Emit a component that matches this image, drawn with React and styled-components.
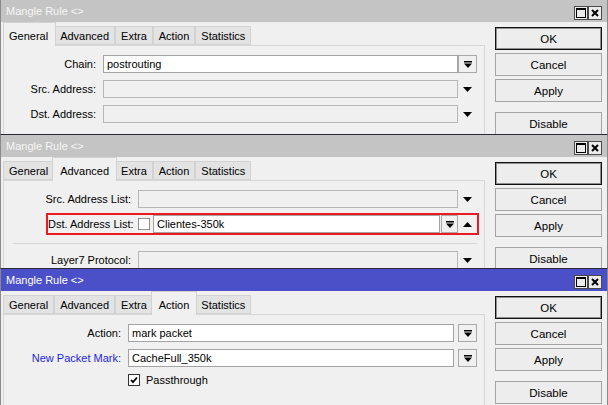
import React from 'react';
import styled, { createGlobalStyle } from 'styled-components';

const GlobalStyle = createGlobalStyle`
  html, body {
    margin: 0;
    padding: 0;
    background: #f0f0f0;
  }
  body {
    font-family: "Liberation Sans", Arial, sans-serif;
    font-size: 11px;
    color: #000;
  }
`;

const TABS = ['General', 'Advanced', 'Extra', 'Action', 'Statistics'];

const Screen = styled.div`
  width: 608px;
  height: 405px;
  overflow: hidden;
  display: flex;
  flex-direction: column;
`;

const Window = styled.div`
  flex: none;
  box-sizing: border-box;
  height: ${p => p.$h}px;
  overflow: hidden;
  display: flex;
  flex-direction: column;
  background: #f0f0f0;
  border-left: 1px solid #8a8a8a;
  border-right: 1px solid #8a8a8a;
  border-bottom: ${p => (p.$last ? 'none' : '1px solid #2a2a33')};
`;

const TitleBar = styled.div`
  flex: none;
  height: 22px;
  display: flex;
  align-items: center;
  justify-content: space-between;
  padding: 0 5px 0 5px;
  background: ${p => (p.$active ? '#4b50c8' : '#c4c4c4')};
  color: ${p => (p.$active ? '#ffffff' : '#f6f6f6')};
`;

const Title = styled.span`
  font-size: 11px;
`;

const TitleButtons = styled.div`
  display: flex;
  align-self: flex-start;
  margin-top: 6px;
`;

const TitleBtn = styled.div`
  width: 14px;
  height: 14px;
  box-sizing: border-box;
  border: 1px solid #4a4a4a;
  background: #ececec;
  display: flex;
  align-items: center;
  justify-content: center;
`;

const Body = styled.div`
  flex: 1;
  min-height: 0;
  display: flex;
`;

const Main = styled.div`
  width: 484px;
  flex: none;
  display: flex;
  flex-direction: column;
  padding-left: 2px;
  box-sizing: border-box;
`;

const TabBar = styled.div`
  flex: none;
  height: 23px;
  display: flex;
  align-items: flex-end;
`;

const Tab = styled.div`
  position: relative;
  box-sizing: border-box;
  height: ${p => (p.$selected ? 24 : 19)}px;
  margin: 0 ${p => (p.$selected ? -2 : 0)}px ${p => (p.$selected ? -1 : 0)}px;
  padding: ${p => (p.$selected ? '2px 7px 0' : '0 5px')};
  display: flex;
  align-items: center;
  background: ${p => (p.$selected ? '#f0f0f0' : '#e3e3e3')};
  border: 1px solid #d2d2d2;
  border-bottom: ${p => (p.$selected ? 'none' : '1px solid #d2d2d2')};
  z-index: ${p => (p.$selected ? 2 : 1)};

  &:first-child {
    margin-left: 0;
    padding-left: 5px;
  }
`;

const Panel = styled.div`
  flex: 1;
  border: 1px solid #d7d7d7;
  border-bottom: none;
  padding: 9px 7px 0 0;
  display: flex;
  flex-direction: column;
`;

const Row = styled.div`
  display: flex;
  align-items: center;
  height: 18px;
  flex: none;
  margin-bottom: 7px;
`;

const Label = styled.div`
  width: ${p => p.$w}px;
  flex: none;
  text-align: right;
  padding-right: 7px;
  white-space: nowrap;
  color: ${p => (p.$blue ? '#1f1fe0' : '#000')};
`;

const Field = styled.div`
  flex: 1;
  height: 18px;
  box-sizing: border-box;
  border: 1px solid ${p => (p.$disabled ? '#b6b6b6' : '#a3a3a3')};
  background: ${p => (p.$disabled ? '#f0f0f0' : '#ffffff')};
  padding: 0 3px;
  line-height: 16px;
  white-space: nowrap;
  overflow: hidden;
`;

const Slot = styled.div`
  width: ${p => p.$w || 19}px;
  height: 18px;
  flex: none;
  margin-left: ${p => p.$gap || 0}px;
  box-sizing: border-box;
  border: ${p => (p.$boxed ? '1px solid #a9a9a9' : 'none')};
  display: flex;
  align-items: center;
  justify-content: center;
`;

const Check = styled.div`
  width: 12px;
  height: 12px;
  flex: none;
  box-sizing: border-box;
  background: #fff;
  border: 1px solid ${p => (p.$dark ? '#333' : '#8f8f8f')};
  margin-right: 3px;
  display: flex;
  align-items: center;
  justify-content: center;
`;

const CheckRow = styled.div`
  display: flex;
  align-items: flex-start;
  height: 18px;
  padding-left: ${p => p.$indent}px;
`;

const CheckLabel = styled.span`
  margin-left: 3px;
  line-height: 12px;
`;

const Highlight = styled.div`
  flex: none;
  display: flex;
  align-items: center;
  height: 18px;
  margin: -2px -2px 8px 42px;
  border: 2px solid #ea1b24;
`;

const Separator = styled.div`
  flex: none;
  height: 1px;
  margin: 0 0 7px 9px;
  background: #d6d6d6;
`;

const Side = styled.div`
  width: 107px;
  flex: none;
  margin-left: 10px;
  padding-top: 5px;
  display: flex;
  flex-direction: column;
`;

const SideButton = styled.div`
  height: 23px;
  flex: none;
  box-sizing: border-box;
  margin-top: ${p => (p.$spaced ? 7 : 0)}px;
  margin-bottom: 3px;
  border: 1px solid ${p => (p.$default ? '#111' : '#a4a4a4')};
  box-shadow: ${p => (p.$default ? 'inset 0 0 0 1px #8f8f8f' : 'none')};
  background: #ededed;
  display: flex;
  align-items: center;
  justify-content: center;
  font-size: 11.5px;
`;

const MaxIcon = () => (
  <svg width="10" height="10" viewBox="0 0 10 10">
    <rect x="0.5" y="0.5" width="9" height="9" fill="none" stroke="#000" />
    <rect x="0" y="0" width="10" height="2" fill="#000" />
  </svg>
);

const CloseIcon = () => (
  <svg width="8" height="8" viewBox="0 0 8 8">
    <path d="M1 1L7 7M7 1L1 7" stroke="#000" strokeWidth="2" />
  </svg>
);

const ExpandIcon = () => (
  <svg width="8" height="7" viewBox="0 0 8 7">
    <rect x="0" y="0" width="8" height="1.5" fill="#000" />
    <path d="M0 2.5H8L4 7Z" fill="#000" />
  </svg>
);

const DownIcon = () => (
  <svg width="9" height="5" viewBox="0 0 9 5">
    <path d="M0 0H9L4.5 5Z" fill="#000" />
  </svg>
);

const UpIcon = () => (
  <svg width="9" height="5" viewBox="0 0 9 5">
    <path d="M0 5H9L4.5 0Z" fill="#000" />
  </svg>
);

const TickIcon = () => (
  <svg width="8" height="8" viewBox="0 0 8 8">
    <path d="M1 4L3 6.2L7 1.5" fill="none" stroke="#000" strokeWidth="1.8" />
  </svg>
);

const MangleWindow = ({ h, active, last, tab, children }) => (
  <Window $h={h} $last={last}>
    <TitleBar $active={active}>
      <Title>Mangle Rule &lt;&gt;</Title>
      <TitleButtons>
        <TitleBtn><MaxIcon /></TitleBtn>
        <TitleBtn><CloseIcon /></TitleBtn>
      </TitleButtons>
    </TitleBar>
    <Body>
      <Main>
        <TabBar>
          {TABS.map((t, i) => (
            <Tab key={t} $selected={i === tab}>{t}</Tab>
          ))}
        </TabBar>
        <Panel>{children}</Panel>
      </Main>
      <Side>
        <SideButton $default>OK</SideButton>
        <SideButton>Cancel</SideButton>
        <SideButton>Apply</SideButton>
        <SideButton $spaced>Disable</SideButton>
      </Side>
    </Body>
  </Window>
);

const App = () => {
  return (
    <Screen>
      <GlobalStyle />

      <MangleWindow h={135} tab={0}>
        <Row>
          <Label $w={92}>Chain:</Label>
          <Field>postrouting</Field>
          <Slot $boxed><ExpandIcon /></Slot>
        </Row>
        <Row>
          <Label $w={92}>Src. Address:</Label>
          <Field $disabled />
          <Slot><DownIcon /></Slot>
        </Row>
        <Row>
          <Label $w={92}>Dst. Address:</Label>
          <Field $disabled />
          <Slot><DownIcon /></Slot>
        </Row>
      </MangleWindow>

      <MangleWindow h={134} tab={1}>
        <Row>
          <Label $w={127}>Src. Address List:</Label>
          <Field $disabled />
          <Slot><DownIcon /></Slot>
        </Row>
        <Highlight>
          <Label $w={83}>Dst. Address List:</Label>
          <Check />
          <Field>Clientes-350k</Field>
          <Slot $boxed $w={17} $gap={1}><ExpandIcon /></Slot>
          <Slot><UpIcon /></Slot>
        </Highlight>
        <Separator />
        <Row>
          <Label $w={127}>Layer7 Protocol:</Label>
          <Field $disabled />
          <Slot><DownIcon /></Slot>
        </Row>
      </MangleWindow>

      <MangleWindow h={136} tab={3} active last>
        <Row>
          <Label $w={117}>Action:</Label>
          <Field>mark packet</Field>
          <Slot $boxed $gap={4}><ExpandIcon /></Slot>
        </Row>
        <Row>
          <Label $w={117} $blue>New Packet Mark:</Label>
          <Field>CacheFull_350k</Field>
          <Slot $boxed $gap={4}><ExpandIcon /></Slot>
        </Row>
        <CheckRow $indent={124}>
          <Check $dark><TickIcon /></Check>
          <CheckLabel>Passthrough</CheckLabel>
        </CheckRow>
      </MangleWindow>
    </Screen>
  );
};

export default App;
